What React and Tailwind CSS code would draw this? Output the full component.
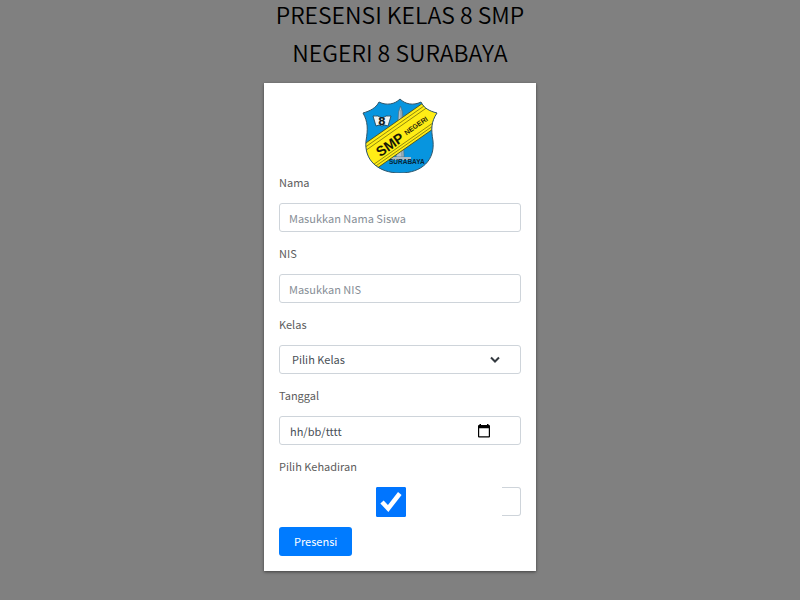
const label = "block h-[18px] text-[11px] leading-[18px] text-[#5c5c5c]";
const control =
  "block h-[29px] w-full rounded-[3px] border border-[#ced4da] bg-white text-[11px] text-[#495057] outline-none";

function Logo() {
  return (
    <svg viewBox="0 0 76 75" className="mx-auto block h-[75px] w-[76px]" role="img" aria-label="SMP Negeri 8 Surabaya">
      <defs>
        <clipPath id="shield">
          <path d="M38 1C33 6 25 8 17 4C14 10 8 13 1 15C6 24 6 31 4 43C2 62 16 75 38 75C60 75 73 62 71 43C69 31 69 24 75 15C67 13 62 10 59 4C51 8 43 6 38 1Z" />
        </clipPath>
      </defs>
      <g clipPath="url(#shield)">
        <rect width="76" height="76" fill="#0795df" />
        <path d="M36.500 14L38.500 8L40.500 14L42 59H34Z" fill="#b4c3cc" stroke="#456b80" strokeWidth=".7" />
        <path d="M39 12L40 59" stroke="#6f8d9e" />
        <path d="M29 59H49V62H29Z" fill="#a9bbc7" />
        <g transform="rotate(-35 38 37)">
          <rect x="-12" y="24" width="104" height="27" fill="#ffed16" stroke="#4c4b17" strokeWidth=".8" />
          <path d="M-12 27H92M-12 30H92M-12 46H92M-12 48.500H92" stroke="#59530b" strokeWidth=".6" />
          <text x="9" y="44" fontSize="14" fontWeight="700" fontFamily="Liberation Sans, sans-serif" fill="#171707">SMP</text>
          <text x="43" y="41" fontSize="7" fontWeight="700" fontFamily="Liberation Sans, sans-serif" fill="#29260a">NEGERI</text>
        </g>
        <path d="M11 18Q16 17 20 20Q24 17 29 18L26 28Q22 26 20 28Q17 26 14 28Z" fill="#eef4f6" stroke="#183d51" strokeWidth=".8" />
        <text x="16" y="27" fontSize="11" fontWeight="700" fontFamily="DejaVu Sans, sans-serif" fill="#111c22">8</text>
        <text x="27" y="66" fontSize="6.500" fontWeight="700" fontFamily="Liberation Sans, sans-serif" fill="#062638">SURABAYA</text>
      </g>
      <path d="M38 1C33 6 25 8 17 4C14 10 8 13 1 15C6 24 6 31 4 43C2 62 16 75 38 75C60 75 73 62 71 43C69 31 69 24 75 15C67 13 62 10 59 4C51 8 43 6 38 1Z" fill="none" stroke="#31566a" strokeWidth="1" />
    </svg>
  );
}

export default function App() {
  return (
    <div className="flow-root min-h-screen bg-[#808080] font-['Noto_Sans_CJK_SC',sans-serif]">
      <main className="mx-auto w-[272px]">
        <h1 className="mb-[17px] flex flex-col gap-2.5 text-center text-[23px] leading-7 font-[350] text-black">
          <span>PRESENSI KELAS 8 SMP</span>
          <span>NEGERI 8 SURABAYA</span>
        </h1>
        <form className="bg-white p-[15px] shadow-[0_1px_3px_rgba(0,0,0,0.5)]" onSubmit={(e) => e.preventDefault()}>
          <Logo />
          <div className="flex flex-col gap-3">
            <label htmlFor="nama" className={label}>Nama</label>
            <input id="nama" type="text" placeholder="Masukkan Nama Siswa" className={`${control} px-[9px] placeholder:text-[#868e96]`} />
            <label htmlFor="nis" className={label}>NIS</label>
            <input id="nis" type="text" placeholder="Masukkan NIS" className={`${control} px-[9px] placeholder:text-[#868e96]`} />
            <label htmlFor="kelas" className={label}>Kelas</label>
            <div className="relative">
              <select id="kelas" defaultValue="" className={`${control} appearance-none px-3`}>
                <option value="">Pilih Kelas</option>
              </select>
              <svg viewBox="0 0 10 8" className="pointer-events-none absolute top-[11px] right-[21px] h-2 w-2.5" fill="none" stroke="#343a40" strokeWidth="2">
                <path d="M1 1.500L5 5.500L9 1.500" />
              </svg>
            </div>
            <label htmlFor="tanggal" className={label}>Tanggal</label>
            <div className="relative">
              <input id="tanggal" type="text" placeholder="hh/bb/tttt" className={`${control} px-2.5 placeholder:text-[#495057]`} />
              <button type="button" aria-label="Pilih tanggal" className="absolute top-2 right-[30px]">
                <svg viewBox="0 0 14 14" className="block size-3.5" fill="#000">
                  <path fillRule="evenodd" d="M2.500 0H4V1H10V0H11.500V1H12Q13 1 13 2V12.500Q13 13.500 12 13.500H2Q1 13.500 1 12.500V2Q1 1 2 1H2.500ZM2.200 4.200V12.300H11.800V4.200Z" />
                </svg>
              </button>
            </div>
            <label htmlFor="hadir" className={label}>Pilih Kehadiran</label>
          </div>
          <div className="mt-3 mb-[11px] flex h-[29px] justify-end">
            <div className="relative mr-24 size-[30px]">
              <input id="hadir" type="checkbox" defaultChecked className="peer block size-[30px] appearance-none rounded-[1px] border border-[#0075ff] bg-white checked:bg-[#0075ff]" />
              <svg viewBox="0 0 30 30" className="pointer-events-none absolute inset-0 hidden size-[30px] peer-checked:block" fill="none" stroke="#fff" strokeWidth="4.500">
                <path d="M6 15L12.200 21.500L23.800 6.500" />
              </svg>
            </div>
            <span className="w-[19px] rounded-r-[3px] border border-l-0 border-[#ced4da]" />
          </div>
          <button type="submit" className="block h-[29px] rounded-[3px] bg-[#007bff] px-[15px] text-[11px] text-white">
            Presensi
          </button>
        </form>
      </main>
    </div>
  );
}
